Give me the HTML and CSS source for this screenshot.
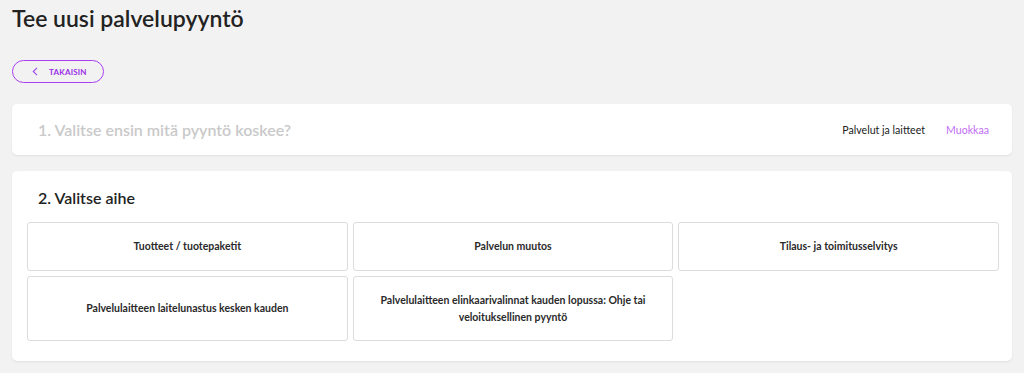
FILE: index.html
```html
<!DOCTYPE html>
<html lang="fi">
<head>
<meta charset="utf-8">
<title>Tee uusi palvelupyyntö</title>
<link rel="stylesheet" href="styles.css">
</head>
<body>
<main class="page">
  <h1 class="title">Tee uusi palvelupyyntö</h1>
  <button class="back">
    <svg class="chev" width="6" height="9" viewBox="0 0 6 9"><path d="M5 0.8 L1.3 4.5 L5 8.2" fill="none" stroke="currentColor" stroke-width="1.2"/></svg>
    <span>TAKAISIN</span>
  </button>
  <section class="card step1">
    <h2 class="step-title muted">1. Valitse ensin mitä pyyntö koskee?</h2>
    <div class="step-right">
      <span class="chosen">Palvelut ja laitteet</span>
      <a class="edit">Muokkaa</a>
    </div>
  </section>
  <section class="card step2">
    <h2 class="step-title">2. Valitse aihe</h2>
    <div class="tiles">
      <div class="tile short">Tuotteet / tuotepaketit</div>
      <div class="tile short">Palvelun muutos</div>
      <div class="tile short">Tilaus- ja toimitusselvitys</div>
      <div class="tile tall">Palvelulaitteen laitelunastus kesken kauden</div>
      <div class="tile tall">Palvelulaitteen elinkaarivalinnat kauden lopussa: Ohje tai veloituksellinen pyyntö</div>
    </div>
  </section>
</main>
</body>
</html>
```
FILE: styles.css
```css
* { box-sizing: border-box; }
html, body { margin: 0; padding: 0; }
body {
  background: #f2f2f2;
  font-family: Lato, "Noto Sans", sans-serif;
  color: #222;
  width: 1024px;
  height: 373px;
  overflow: hidden;
}
.page {
  padding: 4px 12px 0 12px;
  display: flex;
  flex-direction: column;
}
.title {
  margin: 0;
  font-size: 23px;
  font-weight: 600;
  line-height: 28px;
  color: #222;
}
.back {
  margin-top: 28px;
  align-self: flex-start;
  width: 92px;
  height: 23px;
  border: 1.5px solid #a93ff0;
  border-radius: 12px;
  background: transparent;
  color: #9a2ee6;
  display: flex;
  align-items: center;
  padding: 0 0 0 19px;
  font-family: inherit;
  font-size: 8px;
  font-weight: 700;
  letter-spacing: 0.2px;
  cursor: pointer;
}
.chev { margin-right: 11px; color: #a050ea; }
.card {
  background: #fff;
  border-radius: 5px;
  box-shadow: 0 1px 2px rgba(0,0,0,0.08);
  width: 1000px;
}
.step1 {
  margin-top: 21px;
  height: 51px;
  display: flex;
  align-items: center;
  justify-content: space-between;
  padding: 0 23px 0 26px;
}
.step-title {
  margin: 0;
  font-size: 16px;
  font-weight: 600;
  color: #222;
}
.muted { color: #c9c9c9; }
.step-right {
  display: flex;
  align-items: center;
  gap: 21px;
  font-size: 10.6px;
}
.chosen { color: #222; }
.edit { color: #bf6ef5; }
.step2 {
  margin-top: 16px;
  padding: 17px 13px 20px 15px;
}
.step2 .step-title {
  padding-left: 11px;
  line-height: 19px;
}
.tiles {
  margin-top: 15px;
  display: grid;
  grid-template-columns: repeat(3, 1fr);
  gap: 5px;
}
.tile {
  border: 1px solid #dcdcdc;
  border-radius: 3px;
  display: flex;
  align-items: center;
  justify-content: center;
  text-align: center;
  font-size: 10.5px;
  font-weight: 700;
  line-height: 17px;
  color: #2a2a2a;
  padding: 0 20px;
}
.short { height: 49px; }
.tall { height: 65px; }
```
